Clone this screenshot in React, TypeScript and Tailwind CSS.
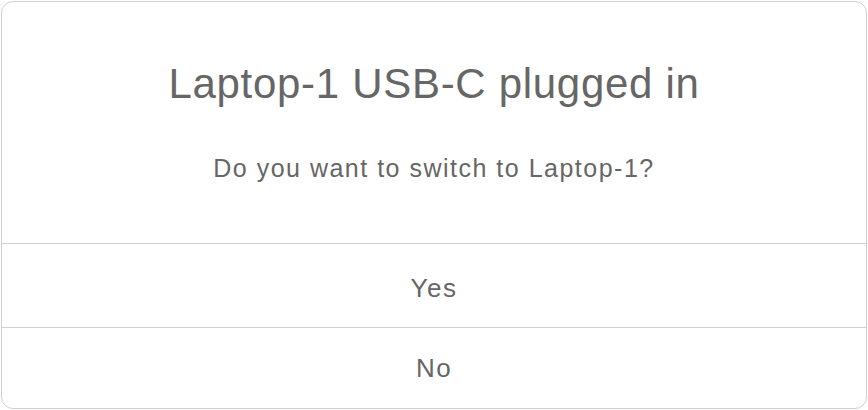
export default function App() {
  return (
    <div className="w-[868px] h-[410px] bg-white p-px" style={{ fontFamily: '"Liberation Sans", Arial, sans-serif' }}>
      <div className="flex h-[408px] w-[866px] flex-col overflow-hidden rounded-[12px] border border-[#d0d0d0] bg-white text-[#666666]">
        <div className="flex h-[241px] flex-col items-center">
          <h1 className="mt-[57px] text-[42px] leading-[50px] tracking-[0.7px]">Laptop-1 USB-C plugged in</h1>
          <p className="mt-[44px] text-[25px] leading-[30px] tracking-[1.5px]">Do you want to switch to Laptop-1?</p>
        </div>
        <button className="flex h-[84px] items-center justify-center border-t border-[#d0d0d0] pt-[5px] text-[26px] tracking-[1.5px]">
          Yes
        </button>
        <button className="flex flex-1 items-center justify-center border-t border-[#d0d0d0] text-[26px] tracking-[1.5px]">
          No
        </button>
      </div>
    </div>
  );
}
